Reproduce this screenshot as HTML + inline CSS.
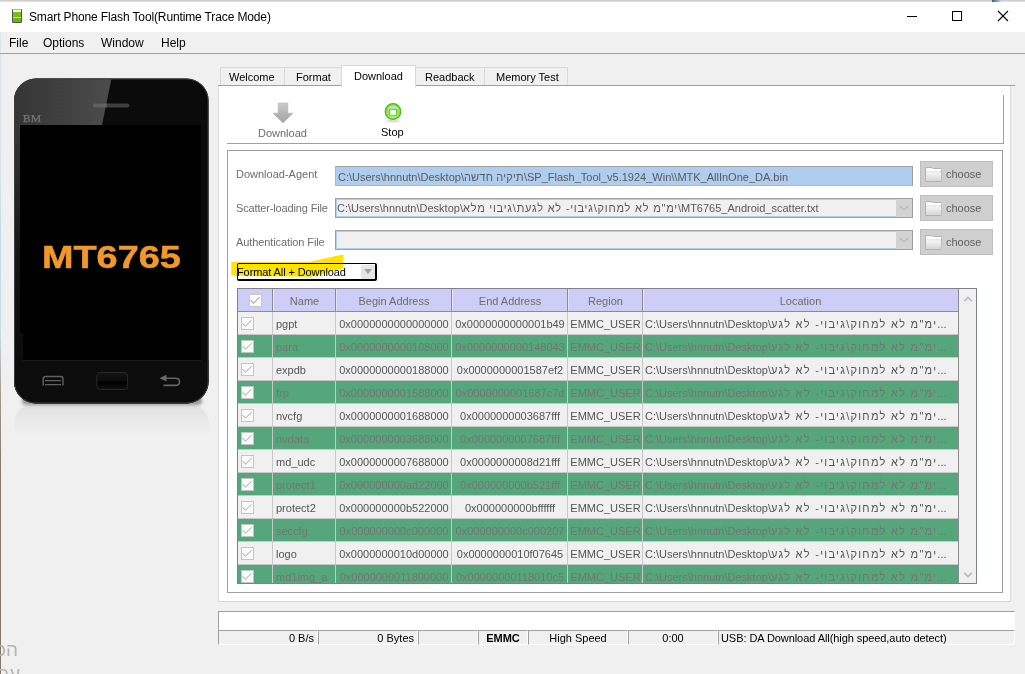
<!DOCTYPE html>
<html><head><meta charset="utf-8">
<style>
*{margin:0;padding:0;box-sizing:border-box}
html,body{width:1025px;height:674px;overflow:hidden;background:#f0f0f0;font-family:"Liberation Sans",sans-serif;color:#000}
.a{position:absolute}
.t{position:absolute;white-space:nowrap;line-height:1}
.h{letter-spacing:1.28px}
</style></head><body>
<!-- window frame -->
<div class="a" style="left:0;top:0;width:1025px;height:2px;background:linear-gradient(#c9c9c9,#e4e4e4)"></div>
<div class="a" style="left:0;top:2px;width:1025px;height:30px;background:#fff"></div>
<div class="a" style="left:0;top:32px;width:1px;height:642px;background:linear-gradient(#dfe4ea 0px,#d6e2ea 150px,#c2dbe8 200px,#c8dce6 300px,#a89a90 360px,#8a7a6e 430px,#86766a 674px)"></div>
<!-- app icon -->
<div class="a" style="left:12px;top:9px;width:10px;height:14px;background:#555;border-radius:1px"></div>
<div class="a" style="left:13px;top:10px;width:8px;height:12px;background:linear-gradient(#7cc414,#6ab010)"></div>
<div class="a" style="left:13px;top:9px;width:8px;height:1px;background:#b4b4b4"></div>
<div class="a" style="left:13px;top:10px;width:8px;height:2px;background:#eef2ea"></div>
<div class="a" style="left:13px;top:17px;width:8px;height:1px;background:#c4e494"></div>
<div class="t" style="left:29px;top:11px;font-size:12px;letter-spacing:-0.13px">Smart Phone Flash Tool(Runtime Trace Mode)</div>
<div class="a" style="left:992px;top:0;width:9px;height:2px;background:linear-gradient(90deg,#3a5a80,#9ab0c8 70%,rgba(220,220,220,0))"></div>
<!-- window buttons -->
<div class="a" style="left:907px;top:16px;width:10px;height:1px;background:#000"></div>
<div class="a" style="left:952px;top:11px;width:10px;height:10px;border:1px solid #000"></div>
<svg class="a" style="left:997px;top:10px" width="12" height="12" viewBox="0 0 12 12"><path d="M1 1L11 11M11 1L1 11" stroke="#000" stroke-width="1.1"/></svg>
<!-- menu -->
<div class="a" style="left:0;top:53px;width:1025px;height:1px;background:#a0a0a0"></div>
<div class="t" style="left:9px;top:37px;font-size:12px">File</div>
<div class="t" style="left:43px;top:37px;font-size:12px">Options</div>
<div class="t" style="left:101px;top:37px;font-size:12px">Window</div>
<div class="t" style="left:161px;top:37px;font-size:12px">Help</div>

<!-- PHONE -->
<svg class="a" style="left:0;top:60px" width="218" height="390" viewBox="0 60 218 390">
<defs>
<linearGradient id="refl" x1="0" y1="0" x2="0" y2="1"><stop offset="0" stop-color="#e2e2e2"/><stop offset="1" stop-color="#f0f0f0"/></linearGradient><filter id="bl2" x="-20%" y="-100%" width="140%" height="300%"><feGaussianBlur stdDeviation="1.5"/></filter>
<linearGradient id="glare" gradientUnits="userSpaceOnUse" x1="14" y1="0" x2="112" y2="0"><stop offset="0" stop-color="#353535"/><stop offset="1" stop-color="#4c4c4c"/></linearGradient>
<linearGradient id="lbz" x1="0" y1="0" x2="0" y2="1"><stop offset="0" stop-color="#383838"/><stop offset="0.6" stop-color="#141414"/><stop offset="1" stop-color="#0c0c0c"/></linearGradient>
<linearGradient id="home" x1="0" y1="0" x2="0" y2="1"><stop offset="0" stop-color="#141414"/><stop offset="0.45" stop-color="#0c0c0c"/><stop offset="0.6" stop-color="#000"/><stop offset="1" stop-color="#111"/></linearGradient>
<clipPath id="pc"><rect x="14" y="78.5" width="194.6" height="325" rx="22" ry="22"/></clipPath>
</defs>
<path d="M14 436 V426 Q14 404.5 36 404.5 H187 Q209 404.5 209 426 V436 Z" fill="url(#refl)"/>
<rect x="22" y="396" width="180" height="9" rx="4" fill="#000" opacity="0.35" filter="url(#bl2)"/>
<rect x="14" y="78.5" width="194.6" height="325" rx="22" ry="22" fill="#0b0b0b"/>
<g clip-path="url(#pc)">
<path d="M0 60 L112 60 L111.6 78 L102 125 L0 125 Z" fill="url(#glare)"/>
<rect x="0" y="360" width="218" height="50" fill="#0c0c0c"/>
<rect x="0" y="124" width="21" height="230" fill="url(#lbz)"/>
</g>
<rect x="14.5" y="79" width="193.6" height="324" rx="21.5" ry="21.5" fill="none" stroke="#3e3e3e" stroke-width="1"/>
<rect x="20" y="125" width="181" height="235" fill="#000"/>
<rect x="20" y="333" width="3" height="28" fill="#0d0d0d"/>
<line x1="23" y1="360.5" x2="201" y2="360.5" stroke="#1c1c1c" stroke-width="1"/>
<rect x="93" y="103.5" width="36.5" height="4" rx="2" fill="#3e3e3e"/><path d="M95 103.5 H107.2 L106.4 107.5 H95 A2 2 0 0 1 95 103.5Z" fill="#626262"/>
<text x="22.8" y="121.9" font-family="Liberation Serif" font-size="10.6" fill="#747474" stroke="#747474" stroke-width="0.25" textLength="18.3" lengthAdjust="spacingAndGlyphs">BM</text>
<path d="M43.2 385.5 V379 q0 -2.5 2.5 -2.5 h14.8 q2.5 0 2.5 2.5 V385.5 M45 380.6 h16 M45 384.6 h16" fill="none" stroke="#606060" stroke-width="1.4"/>
<rect x="96.8" y="372.5" width="30.8" height="17" rx="3.5" fill="url(#home)" stroke="#282828" stroke-width="1"/>
<path d="M159.5 378.2 L166.5 374.8 L166.5 381.6 Z" fill="#6a6a6a"/>
<path d="M165 378.2 H175.5 q4 0 4 3.6 q0 3.6 -4 3.6 H163.5" fill="none" stroke="#646464" stroke-width="1.6"/>
</svg>
<div class="t" style="left:42px;top:242px;font-size:30.5px;font-weight:bold;color:#f0982a;-webkit-text-stroke:0.5px #f0982a;transform:scaleX(1.24);transform-origin:0 0">MT6765</div>
<div class="t" style="left:-4px;top:640px;font-size:19px;color:#b4b4b4">הכ</div>
<div class="t" style="left:-1px;top:664px;font-size:19px;color:#b4b4b4">ער</div>

<!-- TABS -->
<div class="a" style="left:218px;top:85px;width:797px;height:1px;background:#a0a0a0"></div>
<div class="a" style="left:218px;top:86px;width:793px;height:516px;background:#fff;border-left:1px solid #d9d9d9;border-right:1px solid #d9d9d9;border-bottom:1px solid #d9d9d9"></div>
<div class="a" style="left:220px;top:67px;width:65px;height:18px;background:#f0f0f0;border:1px solid #d9d9d9;border-bottom:0"></div>
<div class="a" style="left:284px;top:67px;width:58px;height:18px;background:#f0f0f0;border:1px solid #d9d9d9;border-bottom:0"></div>
<div class="a" style="left:415px;top:67px;width:70px;height:18px;background:#f0f0f0;border:1px solid #d9d9d9;border-bottom:0"></div>
<div class="a" style="left:484px;top:67px;width:84px;height:18px;background:#f0f0f0;border:1px solid #d9d9d9;border-bottom:0"></div>
<div class="a" style="left:341px;top:65px;width:75px;height:22px;background:#fff;border:1px solid #d9d9d9;border-bottom:0"></div>
<div class="t" style="left:229px;top:72px;font-size:11px">Welcome</div>
<div class="t" style="left:296px;top:72px;font-size:11px">Format</div>
<div class="t" style="left:354px;top:71px;font-size:11px">Download</div>
<div class="t" style="left:425px;top:72px;font-size:11px">Readback</div>
<div class="t" style="left:496px;top:72px;font-size:11px">Memory Test</div>


<!-- TOOLBAR -->
<div class="a" style="left:227px;top:143px;width:777px;height:1px;background:#a0a0a0"></div>
<div class="a" style="left:1003px;top:95px;width:1px;height:49px;background:#a0a0a0"></div>
<svg class="a" style="left:273px;top:102px" width="21" height="21" viewBox="0 0 21 21">
<defs><linearGradient id="fg" x1="0" y1="0" x2="0" y2="1"><stop offset="0" stop-color="#f6f6f6"/><stop offset="1" stop-color="#d6d6d6"/></linearGradient><linearGradient id="ag" x1="0" y1="0" x2="0" y2="1"><stop offset="0" stop-color="#cdcdcd"/><stop offset="0.5" stop-color="#b4b4b4"/><stop offset="1" stop-color="#a6a6a6"/></linearGradient></defs>
<path d="M5.2 1h9.6v10.2h5.2l-10 9.8l-10-9.8h5.2z" fill="url(#ag)" stroke="#b0b0b0" stroke-width="0.6"/></svg>
<div class="t" style="left:258px;top:128px;font-size:11px;color:#6d6d6d">Download</div>
<svg class="a" style="left:383px;top:102px" width="20" height="22" viewBox="0 0 20 22">
<defs><radialGradient id="sg" cx="0.5" cy="0.75" r="0.6"><stop offset="0" stop-color="#b4f868"/><stop offset="1" stop-color="#82d848"/></radialGradient>
<filter id="bl"><feGaussianBlur stdDeviation="0.8"/></filter></defs>
<ellipse cx="10" cy="18.8" rx="7" ry="1.3" fill="#c8c8c8" filter="url(#bl)"/>
<circle cx="10" cy="9.5" r="7.8" fill="url(#sg)" stroke="#4cb81c" stroke-width="1.2"/>
<path d="M4 7.5 A6.5 6.5 0 0 1 16 7.5 Z" fill="#c8ecb0" opacity="0.8"/>
<rect x="6.6" y="7.4" width="6.8" height="5.8" fill="#fff" stroke="#62c238" stroke-width="0.9"/>
</svg>
<div class="t" style="left:381px;top:127px;font-size:11px;color:#000">Stop</div>

<!-- GROUPBOX -->
<div class="a" style="left:227px;top:150px;width:776px;height:443px;border:1px solid #a0a0a0"></div>
<div class="t" style="left:236px;top:169px;font-size:11px;color:#6d6d6d">Download-Agent</div>
<div class="t" style="left:236px;top:203px;font-size:11px;color:#6d6d6d;letter-spacing:-0.15px">Scatter-loading File</div>
<div class="t" style="left:236px;top:237px;font-size:11px;color:#6d6d6d;letter-spacing:-0.1px">Authentication File</div>

<div class="a" style="left:335px;top:166px;width:578px;height:20px;background:#afcdee;border:1px solid #a0a0a0;border-left-color:#a8b8cc;border-bottom-color:#a8b8cc"></div>
<div class="t" style="left:338px;top:172px;font-size:11px;color:#5a5a5a">C:\Users\hnnutn\Desktop\<span class="h" style="letter-spacing:0.2px">תיקיה חדשה</span>\SP_Flash_Tool_v5.1924_Win\\MTK_AllInOne_DA.bin</div>

<div class="a" style="left:335px;top:198px;width:578px;height:20px;background:#f0f0f0;border:1px solid #a0a0a0"></div>
<div class="a" style="left:336px;top:199px;width:560px;height:18px;border:1px solid #b4d0f0;border-right:0"></div>
<div class="a" style="left:896px;top:199px;width:16px;height:18px;background:#d2d2d2"></div>
<svg class="a" style="left:898px;top:203px" width="12" height="10" viewBox="0 0 12 10"><path d="M2 3l4 4l4-4" fill="none" stroke="#a8a8a8" stroke-width="1"/></svg>
<div class="t" style="left:337px;top:203px;font-size:11px;color:#5a5a5a">C:\Users\hnnutn\Desktop\<span class="h" style="letter-spacing:0.78px">ימ"מ לא למחוק\גיבוי- לא לגעת\גיבוי מלא</span>\MT6765_Android_scatter.txt</div>

<div class="a" style="left:335px;top:230px;width:578px;height:20px;background:#f0f0f0;border:1px solid #a0a0a0"></div>
<div class="a" style="left:336px;top:231px;width:560px;height:18px;border:1px solid #b4d0f0;border-right:0"></div>
<div class="a" style="left:896px;top:231px;width:16px;height:18px;background:#d2d2d2"></div>
<svg class="a" style="left:898px;top:235px" width="12" height="10" viewBox="0 0 12 10"><path d="M2 3l4 4l4-4" fill="none" stroke="#a8a8a8" stroke-width="1"/></svg>
<div class="a" style="left:920px;top:161px;width:73px;height:26px;background:#cfcfcf;border:1px solid #bdbdbd"></div>
<svg class="a" style="left:925px;top:167px" width="17" height="15" viewBox="0 0 17 15"><path d="M0.5 0.5h6.5l1 1h8v13h-15.5z" fill="#f4f4f4" stroke="#b2b2b2"/><rect x="1" y="2" width="15" height="2.6" fill="#fdfdfd"/><rect x="1" y="4.6" width="15" height="0.8" fill="#cfcfcf"/><rect x="1" y="5.4" width="15" height="8.6" fill="url(#fg)"/></svg>
<div class="t" style="left:946px;top:169px;font-size:11px;color:#5f5f5f">choose</div>
<div class="a" style="left:920px;top:195px;width:73px;height:26px;background:#cfcfcf;border:1px solid #bdbdbd"></div>
<svg class="a" style="left:925px;top:201px" width="17" height="15" viewBox="0 0 17 15"><path d="M0.5 0.5h6.5l1 1h8v13h-15.5z" fill="#f4f4f4" stroke="#b2b2b2"/><rect x="1" y="2" width="15" height="2.6" fill="#fdfdfd"/><rect x="1" y="4.6" width="15" height="0.8" fill="#cfcfcf"/><rect x="1" y="5.4" width="15" height="8.6" fill="url(#fg)"/></svg>
<div class="t" style="left:946px;top:203px;font-size:11px;color:#5f5f5f">choose</div>
<div class="a" style="left:920px;top:229px;width:73px;height:26px;background:#cfcfcf;border:1px solid #bdbdbd"></div>
<svg class="a" style="left:925px;top:235px" width="17" height="15" viewBox="0 0 17 15"><path d="M0.5 0.5h6.5l1 1h8v13h-15.5z" fill="#f4f4f4" stroke="#b2b2b2"/><rect x="1" y="2" width="15" height="2.6" fill="#fdfdfd"/><rect x="1" y="4.6" width="15" height="0.8" fill="#cfcfcf"/><rect x="1" y="5.4" width="15" height="8.6" fill="url(#fg)"/></svg>
<div class="t" style="left:946px;top:237px;font-size:11px;color:#5f5f5f">choose</div>

<!-- FORMAT COMBO -->
<div class="a" style="left:237px;top:263px;width:140px;height:18px;background:#fff;border:1px solid #000;border-right-width:2px;border-bottom-width:2px;border-radius:2px"></div>
<div class="a" style="left:361px;top:265px;width:14px;height:14px;background:#e6e6e6"></div>
<svg class="a" style="left:362px;top:268px" width="12" height="8" viewBox="0 0 12 8"><path d="M2 1h8l-4 5z" fill="#a0a0a0"/></svg>
<div class="t" style="left:237px;top:267px;font-size:11px;color:#000;letter-spacing:-0.1px">Format All + Download</div>
<svg class="a" style="left:230px;top:253px;mix-blend-mode:multiply" width="116" height="25" viewBox="0 0 116 25"><path d="M1.3 8.9 L 79 9 C 90 7, 104 3, 113.5 1.8 L 113.5 14.9 C 104 17.5, 92 21.5, 81 23.8 L 1.3 22.6 Z" fill="#fee300"/></svg>

<!-- TABLE -->
<div class="a" style="left:237px;top:288px;width:740px;height:296px;border:1px solid #80808c;background:#f0f0f0;overflow:hidden">
<div class="a" style="left:0;top:0;width:721px;height:23px;background:#cdcdf5;border-bottom:1px solid #8c8c8c"></div>
<div class="a" style="left:34px;top:0;width:1px;height:22px;background:#8c8c98"></div><div class="a" style="left:35px;top:0;width:1px;height:22px;background:#e4e4f8"></div>
<div class="a" style="left:97px;top:0;width:1px;height:22px;background:#8c8c98"></div><div class="a" style="left:98px;top:0;width:1px;height:22px;background:#e4e4f8"></div>
<div class="a" style="left:213px;top:0;width:1px;height:22px;background:#8c8c98"></div><div class="a" style="left:214px;top:0;width:1px;height:22px;background:#e4e4f8"></div>
<div class="a" style="left:329px;top:0;width:1px;height:22px;background:#8c8c98"></div><div class="a" style="left:330px;top:0;width:1px;height:22px;background:#e4e4f8"></div>
<div class="a" style="left:404px;top:0;width:1px;height:22px;background:#8c8c98"></div><div class="a" style="left:405px;top:0;width:1px;height:22px;background:#e4e4f8"></div>
<div class="a" style="left:720px;top:0;width:1px;height:296px;background:#8c8c8c"></div>
<div class="a" style="left:0;top:23px;width:1px;height:273px;background:#d8d8d8"></div><div class="a" style="left:1px;top:23px;width:1px;height:273px;background:rgba(255,255,255,0.35)"></div>
<div class="a" style="left:11px;top:5px;width:13px;height:13px;background:#fdfdfd;border:1px solid #c8c8c8"></div><svg class="a" style="left:11px;top:5px" width="13" height="13" viewBox="0 0 13 13"><path d="M1.6 6.2L4.4 9.2L10.6 3.2" fill="none" stroke="#a8a8a8" stroke-width="1.1"/></svg>
<div class="t" style="left:35px;top:7px;width:63px;text-align:center;font-size:11px;color:#6d6d6d">Name</div>
<div class="t" style="left:98px;top:7px;width:116px;text-align:center;font-size:11px;color:#6d6d6d">Begin Address</div>
<div class="t" style="left:214px;top:7px;width:116px;text-align:center;font-size:11px;color:#6d6d6d">End Address</div>
<div class="t" style="left:330px;top:7px;width:75px;text-align:center;font-size:11px;color:#6d6d6d">Region</div>
<div class="t" style="left:405px;top:7px;width:315px;text-align:center;font-size:11px;color:#6d6d6d">Location</div>
<div class="a" style="left:0;top:23px;width:720px;height:23px;background:#f0f0f0;border-bottom:1px solid #c8c8c8"></div>
<div class="a" style="left:34px;top:23px;width:1px;height:23px;background:#c8c8c8"></div>
<div class="a" style="left:97px;top:23px;width:1px;height:23px;background:#c8c8c8"></div>
<div class="a" style="left:213px;top:23px;width:1px;height:23px;background:#c8c8c8"></div>
<div class="a" style="left:329px;top:23px;width:1px;height:23px;background:#c8c8c8"></div>
<div class="a" style="left:404px;top:23px;width:1px;height:23px;background:#c8c8c8"></div>
<div class="a" style="left:3px;top:28px;width:13px;height:13px;background:#fafafa;border:1px solid #c4c4c4"></div><svg class="a" style="left:3px;top:28px" width="13" height="13" viewBox="0 0 13 13"><path d="M1.6 6.2L4.4 9.2L10.6 3.2" fill="none" stroke="#a4a4a4" stroke-width="1"/></svg>
<div class="t" style="left:38px;top:30px;font-size:11px;color:#555555">pgpt</div>
<div class="t" style="left:98px;top:30px;width:116px;text-align:center;font-size:11px;color:#555555">0x0000000000000000</div>
<div class="t" style="left:214px;top:30px;width:116px;text-align:center;font-size:11px;color:#555555">0x0000000000001b49</div>
<div class="t" style="left:330px;top:30px;width:75px;text-align:center;font-size:11px;color:#555555">EMMC_USER</div>
<div class="t" style="left:407px;top:30px;font-size:11px;color:#555555">C:\Users\hnnutn\Desktop\<span class="h">ימ"מ לא למחוק\גיבוי- לא לגע</span>...</div>
<div class="a" style="left:0;top:46px;width:720px;height:23px;background:#55a77b;border-bottom:1px solid #c8c8c8"></div>
<div class="a" style="left:34px;top:46px;width:1px;height:23px;background:#c8c8c8"></div>
<div class="a" style="left:97px;top:46px;width:1px;height:23px;background:#c8c8c8"></div>
<div class="a" style="left:213px;top:46px;width:1px;height:23px;background:#c8c8c8"></div>
<div class="a" style="left:329px;top:46px;width:1px;height:23px;background:#c8c8c8"></div>
<div class="a" style="left:404px;top:46px;width:1px;height:23px;background:#c8c8c8"></div>
<div class="a" style="left:3px;top:51px;width:13px;height:13px;background:#fafafa;border:1px solid #c4c4c4"></div><svg class="a" style="left:3px;top:51px" width="13" height="13" viewBox="0 0 13 13"><path d="M1.6 6.2L4.4 9.2L10.6 3.2" fill="none" stroke="#a4a4a4" stroke-width="1"/></svg>
<div class="t" style="left:38px;top:53px;font-size:11px;color:#747474">para</div>
<div class="t" style="left:98px;top:53px;width:116px;text-align:center;font-size:11px;color:#747474">0x0000000000108000</div>
<div class="t" style="left:214px;top:53px;width:116px;text-align:center;font-size:11px;color:#747474">0x0000000000148043</div>
<div class="t" style="left:330px;top:53px;width:75px;text-align:center;font-size:11px;color:#747474">EMMC_USER</div>
<div class="t" style="left:407px;top:53px;font-size:11px;color:#747474">C:\Users\hnnutn\Desktop\<span class="h">ימ"מ לא למחוק\גיבוי- לא לגע</span>...</div>
<div class="a" style="left:0;top:69px;width:720px;height:23px;background:#f0f0f0;border-bottom:1px solid #c8c8c8"></div>
<div class="a" style="left:34px;top:69px;width:1px;height:23px;background:#c8c8c8"></div>
<div class="a" style="left:97px;top:69px;width:1px;height:23px;background:#c8c8c8"></div>
<div class="a" style="left:213px;top:69px;width:1px;height:23px;background:#c8c8c8"></div>
<div class="a" style="left:329px;top:69px;width:1px;height:23px;background:#c8c8c8"></div>
<div class="a" style="left:404px;top:69px;width:1px;height:23px;background:#c8c8c8"></div>
<div class="a" style="left:3px;top:74px;width:13px;height:13px;background:#fafafa;border:1px solid #c4c4c4"></div><svg class="a" style="left:3px;top:74px" width="13" height="13" viewBox="0 0 13 13"><path d="M1.6 6.2L4.4 9.2L10.6 3.2" fill="none" stroke="#a4a4a4" stroke-width="1"/></svg>
<div class="t" style="left:38px;top:76px;font-size:11px;color:#555555">expdb</div>
<div class="t" style="left:98px;top:76px;width:116px;text-align:center;font-size:11px;color:#555555">0x0000000000188000</div>
<div class="t" style="left:214px;top:76px;width:116px;text-align:center;font-size:11px;color:#555555">0x0000000001587ef2</div>
<div class="t" style="left:330px;top:76px;width:75px;text-align:center;font-size:11px;color:#555555">EMMC_USER</div>
<div class="t" style="left:407px;top:76px;font-size:11px;color:#555555">C:\Users\hnnutn\Desktop\<span class="h">ימ"מ לא למחוק\גיבוי- לא לגע</span>...</div>
<div class="a" style="left:0;top:92px;width:720px;height:23px;background:#55a77b;border-bottom:1px solid #c8c8c8"></div>
<div class="a" style="left:34px;top:92px;width:1px;height:23px;background:#c8c8c8"></div>
<div class="a" style="left:97px;top:92px;width:1px;height:23px;background:#c8c8c8"></div>
<div class="a" style="left:213px;top:92px;width:1px;height:23px;background:#c8c8c8"></div>
<div class="a" style="left:329px;top:92px;width:1px;height:23px;background:#c8c8c8"></div>
<div class="a" style="left:404px;top:92px;width:1px;height:23px;background:#c8c8c8"></div>
<div class="a" style="left:3px;top:97px;width:13px;height:13px;background:#fafafa;border:1px solid #c4c4c4"></div><svg class="a" style="left:3px;top:97px" width="13" height="13" viewBox="0 0 13 13"><path d="M1.6 6.2L4.4 9.2L10.6 3.2" fill="none" stroke="#a4a4a4" stroke-width="1"/></svg>
<div class="t" style="left:38px;top:99px;font-size:11px;color:#747474">frp</div>
<div class="t" style="left:98px;top:99px;width:116px;text-align:center;font-size:11px;color:#747474">0x0000000001588000</div>
<div class="t" style="left:214px;top:99px;width:116px;text-align:center;font-size:11px;color:#747474">0x0000000001687c7d</div>
<div class="t" style="left:330px;top:99px;width:75px;text-align:center;font-size:11px;color:#747474">EMMC_USER</div>
<div class="t" style="left:407px;top:99px;font-size:11px;color:#747474">C:\Users\hnnutn\Desktop\<span class="h">ימ"מ לא למחוק\גיבוי- לא לגע</span>...</div>
<div class="a" style="left:0;top:115px;width:720px;height:23px;background:#f0f0f0;border-bottom:1px solid #c8c8c8"></div>
<div class="a" style="left:34px;top:115px;width:1px;height:23px;background:#c8c8c8"></div>
<div class="a" style="left:97px;top:115px;width:1px;height:23px;background:#c8c8c8"></div>
<div class="a" style="left:213px;top:115px;width:1px;height:23px;background:#c8c8c8"></div>
<div class="a" style="left:329px;top:115px;width:1px;height:23px;background:#c8c8c8"></div>
<div class="a" style="left:404px;top:115px;width:1px;height:23px;background:#c8c8c8"></div>
<div class="a" style="left:3px;top:120px;width:13px;height:13px;background:#fafafa;border:1px solid #c4c4c4"></div><svg class="a" style="left:3px;top:120px" width="13" height="13" viewBox="0 0 13 13"><path d="M1.6 6.2L4.4 9.2L10.6 3.2" fill="none" stroke="#a4a4a4" stroke-width="1"/></svg>
<div class="t" style="left:38px;top:122px;font-size:11px;color:#555555">nvcfg</div>
<div class="t" style="left:98px;top:122px;width:116px;text-align:center;font-size:11px;color:#555555">0x0000000001688000</div>
<div class="t" style="left:214px;top:122px;width:116px;text-align:center;font-size:11px;color:#555555">0x0000000003687fff</div>
<div class="t" style="left:330px;top:122px;width:75px;text-align:center;font-size:11px;color:#555555">EMMC_USER</div>
<div class="t" style="left:407px;top:122px;font-size:11px;color:#555555">C:\Users\hnnutn\Desktop\<span class="h">ימ"מ לא למחוק\גיבוי- לא לגע</span>...</div>
<div class="a" style="left:0;top:138px;width:720px;height:23px;background:#55a77b;border-bottom:1px solid #c8c8c8"></div>
<div class="a" style="left:34px;top:138px;width:1px;height:23px;background:#c8c8c8"></div>
<div class="a" style="left:97px;top:138px;width:1px;height:23px;background:#c8c8c8"></div>
<div class="a" style="left:213px;top:138px;width:1px;height:23px;background:#c8c8c8"></div>
<div class="a" style="left:329px;top:138px;width:1px;height:23px;background:#c8c8c8"></div>
<div class="a" style="left:404px;top:138px;width:1px;height:23px;background:#c8c8c8"></div>
<div class="a" style="left:3px;top:143px;width:13px;height:13px;background:#fafafa;border:1px solid #c4c4c4"></div><svg class="a" style="left:3px;top:143px" width="13" height="13" viewBox="0 0 13 13"><path d="M1.6 6.2L4.4 9.2L10.6 3.2" fill="none" stroke="#a4a4a4" stroke-width="1"/></svg>
<div class="t" style="left:38px;top:145px;font-size:11px;color:#747474">nvdata</div>
<div class="t" style="left:98px;top:145px;width:116px;text-align:center;font-size:11px;color:#747474">0x0000000003688000</div>
<div class="t" style="left:214px;top:145px;width:116px;text-align:center;font-size:11px;color:#747474">0x0000000007687fff</div>
<div class="t" style="left:330px;top:145px;width:75px;text-align:center;font-size:11px;color:#747474">EMMC_USER</div>
<div class="t" style="left:407px;top:145px;font-size:11px;color:#747474">C:\Users\hnnutn\Desktop\<span class="h">ימ"מ לא למחוק\גיבוי- לא לגע</span>...</div>
<div class="a" style="left:0;top:161px;width:720px;height:23px;background:#f0f0f0;border-bottom:1px solid #c8c8c8"></div>
<div class="a" style="left:34px;top:161px;width:1px;height:23px;background:#c8c8c8"></div>
<div class="a" style="left:97px;top:161px;width:1px;height:23px;background:#c8c8c8"></div>
<div class="a" style="left:213px;top:161px;width:1px;height:23px;background:#c8c8c8"></div>
<div class="a" style="left:329px;top:161px;width:1px;height:23px;background:#c8c8c8"></div>
<div class="a" style="left:404px;top:161px;width:1px;height:23px;background:#c8c8c8"></div>
<div class="a" style="left:3px;top:166px;width:13px;height:13px;background:#fafafa;border:1px solid #c4c4c4"></div><svg class="a" style="left:3px;top:166px" width="13" height="13" viewBox="0 0 13 13"><path d="M1.6 6.2L4.4 9.2L10.6 3.2" fill="none" stroke="#a4a4a4" stroke-width="1"/></svg>
<div class="t" style="left:38px;top:168px;font-size:11px;color:#555555">md_udc</div>
<div class="t" style="left:98px;top:168px;width:116px;text-align:center;font-size:11px;color:#555555">0x0000000007688000</div>
<div class="t" style="left:214px;top:168px;width:116px;text-align:center;font-size:11px;color:#555555">0x0000000008d21fff</div>
<div class="t" style="left:330px;top:168px;width:75px;text-align:center;font-size:11px;color:#555555">EMMC_USER</div>
<div class="t" style="left:407px;top:168px;font-size:11px;color:#555555">C:\Users\hnnutn\Desktop\<span class="h">ימ"מ לא למחוק\גיבוי- לא לגע</span>...</div>
<div class="a" style="left:0;top:184px;width:720px;height:23px;background:#55a77b;border-bottom:1px solid #c8c8c8"></div>
<div class="a" style="left:34px;top:184px;width:1px;height:23px;background:#c8c8c8"></div>
<div class="a" style="left:97px;top:184px;width:1px;height:23px;background:#c8c8c8"></div>
<div class="a" style="left:213px;top:184px;width:1px;height:23px;background:#c8c8c8"></div>
<div class="a" style="left:329px;top:184px;width:1px;height:23px;background:#c8c8c8"></div>
<div class="a" style="left:404px;top:184px;width:1px;height:23px;background:#c8c8c8"></div>
<div class="a" style="left:3px;top:189px;width:13px;height:13px;background:#fafafa;border:1px solid #c4c4c4"></div><svg class="a" style="left:3px;top:189px" width="13" height="13" viewBox="0 0 13 13"><path d="M1.6 6.2L4.4 9.2L10.6 3.2" fill="none" stroke="#a4a4a4" stroke-width="1"/></svg>
<div class="t" style="left:38px;top:191px;font-size:11px;color:#747474">protect1</div>
<div class="t" style="left:98px;top:191px;width:116px;text-align:center;font-size:11px;color:#747474">0x000000000ad22000</div>
<div class="t" style="left:214px;top:191px;width:116px;text-align:center;font-size:11px;color:#747474">0x000000000b521fff</div>
<div class="t" style="left:330px;top:191px;width:75px;text-align:center;font-size:11px;color:#747474">EMMC_USER</div>
<div class="t" style="left:407px;top:191px;font-size:11px;color:#747474">C:\Users\hnnutn\Desktop\<span class="h">ימ"מ לא למחוק\גיבוי- לא לגע</span>...</div>
<div class="a" style="left:0;top:207px;width:720px;height:23px;background:#f0f0f0;border-bottom:1px solid #c8c8c8"></div>
<div class="a" style="left:34px;top:207px;width:1px;height:23px;background:#c8c8c8"></div>
<div class="a" style="left:97px;top:207px;width:1px;height:23px;background:#c8c8c8"></div>
<div class="a" style="left:213px;top:207px;width:1px;height:23px;background:#c8c8c8"></div>
<div class="a" style="left:329px;top:207px;width:1px;height:23px;background:#c8c8c8"></div>
<div class="a" style="left:404px;top:207px;width:1px;height:23px;background:#c8c8c8"></div>
<div class="a" style="left:3px;top:212px;width:13px;height:13px;background:#fafafa;border:1px solid #c4c4c4"></div><svg class="a" style="left:3px;top:212px" width="13" height="13" viewBox="0 0 13 13"><path d="M1.6 6.2L4.4 9.2L10.6 3.2" fill="none" stroke="#a4a4a4" stroke-width="1"/></svg>
<div class="t" style="left:38px;top:214px;font-size:11px;color:#555555">protect2</div>
<div class="t" style="left:98px;top:214px;width:116px;text-align:center;font-size:11px;color:#555555">0x000000000b522000</div>
<div class="t" style="left:214px;top:214px;width:116px;text-align:center;font-size:11px;color:#555555">0x000000000bffffff</div>
<div class="t" style="left:330px;top:214px;width:75px;text-align:center;font-size:11px;color:#555555">EMMC_USER</div>
<div class="t" style="left:407px;top:214px;font-size:11px;color:#555555">C:\Users\hnnutn\Desktop\<span class="h">ימ"מ לא למחוק\גיבוי- לא לגע</span>...</div>
<div class="a" style="left:0;top:230px;width:720px;height:23px;background:#55a77b;border-bottom:1px solid #c8c8c8"></div>
<div class="a" style="left:34px;top:230px;width:1px;height:23px;background:#c8c8c8"></div>
<div class="a" style="left:97px;top:230px;width:1px;height:23px;background:#c8c8c8"></div>
<div class="a" style="left:213px;top:230px;width:1px;height:23px;background:#c8c8c8"></div>
<div class="a" style="left:329px;top:230px;width:1px;height:23px;background:#c8c8c8"></div>
<div class="a" style="left:404px;top:230px;width:1px;height:23px;background:#c8c8c8"></div>
<div class="a" style="left:3px;top:235px;width:13px;height:13px;background:#fafafa;border:1px solid #c4c4c4"></div><svg class="a" style="left:3px;top:235px" width="13" height="13" viewBox="0 0 13 13"><path d="M1.6 6.2L4.4 9.2L10.6 3.2" fill="none" stroke="#a4a4a4" stroke-width="1"/></svg>
<div class="t" style="left:38px;top:237px;font-size:11px;color:#747474">seccfg</div>
<div class="t" style="left:98px;top:237px;width:116px;text-align:center;font-size:11px;color:#747474">0x000000000c000000</div>
<div class="t" style="left:214px;top:237px;width:116px;text-align:center;font-size:11px;color:#747474">0x000000000c000207</div>
<div class="t" style="left:330px;top:237px;width:75px;text-align:center;font-size:11px;color:#747474">EMMC_USER</div>
<div class="t" style="left:407px;top:237px;font-size:11px;color:#747474">C:\Users\hnnutn\Desktop\<span class="h">ימ"מ לא למחוק\גיבוי- לא לגע</span>...</div>
<div class="a" style="left:0;top:253px;width:720px;height:23px;background:#f0f0f0;border-bottom:1px solid #c8c8c8"></div>
<div class="a" style="left:34px;top:253px;width:1px;height:23px;background:#c8c8c8"></div>
<div class="a" style="left:97px;top:253px;width:1px;height:23px;background:#c8c8c8"></div>
<div class="a" style="left:213px;top:253px;width:1px;height:23px;background:#c8c8c8"></div>
<div class="a" style="left:329px;top:253px;width:1px;height:23px;background:#c8c8c8"></div>
<div class="a" style="left:404px;top:253px;width:1px;height:23px;background:#c8c8c8"></div>
<div class="a" style="left:3px;top:258px;width:13px;height:13px;background:#fafafa;border:1px solid #c4c4c4"></div><svg class="a" style="left:3px;top:258px" width="13" height="13" viewBox="0 0 13 13"><path d="M1.6 6.2L4.4 9.2L10.6 3.2" fill="none" stroke="#a4a4a4" stroke-width="1"/></svg>
<div class="t" style="left:38px;top:260px;font-size:11px;color:#555555">logo</div>
<div class="t" style="left:98px;top:260px;width:116px;text-align:center;font-size:11px;color:#555555">0x0000000010d00000</div>
<div class="t" style="left:214px;top:260px;width:116px;text-align:center;font-size:11px;color:#555555">0x0000000010f07645</div>
<div class="t" style="left:330px;top:260px;width:75px;text-align:center;font-size:11px;color:#555555">EMMC_USER</div>
<div class="t" style="left:407px;top:260px;font-size:11px;color:#555555">C:\Users\hnnutn\Desktop\<span class="h">ימ"מ לא למחוק\גיבוי- לא לגע</span>...</div>
<div class="a" style="left:0;top:276px;width:720px;height:23px;background:#55a77b;border-bottom:1px solid #c8c8c8"></div>
<div class="a" style="left:34px;top:276px;width:1px;height:23px;background:#c8c8c8"></div>
<div class="a" style="left:97px;top:276px;width:1px;height:23px;background:#c8c8c8"></div>
<div class="a" style="left:213px;top:276px;width:1px;height:23px;background:#c8c8c8"></div>
<div class="a" style="left:329px;top:276px;width:1px;height:23px;background:#c8c8c8"></div>
<div class="a" style="left:404px;top:276px;width:1px;height:23px;background:#c8c8c8"></div>
<div class="a" style="left:3px;top:281px;width:13px;height:13px;background:#fafafa;border:1px solid #c4c4c4"></div><svg class="a" style="left:3px;top:281px" width="13" height="13" viewBox="0 0 13 13"><path d="M1.6 6.2L4.4 9.2L10.6 3.2" fill="none" stroke="#a4a4a4" stroke-width="1"/></svg>
<div class="t" style="left:38px;top:283px;font-size:11px;color:#747474">md1img_a</div>
<div class="t" style="left:98px;top:283px;width:116px;text-align:center;font-size:11px;color:#747474">0x0000000011800000</div>
<div class="t" style="left:214px;top:283px;width:116px;text-align:center;font-size:11px;color:#747474">0x00000000118010c5</div>
<div class="t" style="left:330px;top:283px;width:75px;text-align:center;font-size:11px;color:#747474">EMMC_USER</div>
<div class="t" style="left:407px;top:283px;font-size:11px;color:#747474">C:\Users\hnnutn\Desktop\<span class="h">ימ"מ לא למחוק\גיבוי- לא לגע</span>...</div>
<svg class="a" style="left:724px;top:6px" width="12" height="8" viewBox="0 0 12 8"><path d="M2.2 6.2l3.8-3.8l3.8 3.8" fill="none" stroke="#bcbcbc" stroke-width="1.7"/></svg>
<svg class="a" style="left:724px;top:282px" width="12" height="8" viewBox="0 0 12 8"><path d="M2.2 1.8l3.8 3.8l3.8-3.8" fill="none" stroke="#bcbcbc" stroke-width="1.7"/></svg>
</div>

<!-- PROGRESS + STATUS -->
<div class="a" style="left:218px;top:611px;width:797px;height:19px;background:#fff;border-top:1px solid #a0a0a0;border-left:1px solid #a0a0a0;border-right:1px solid #fff"></div>
<div class="a" style="left:218px;top:630px;width:100px;height:15px;background:#f0f0f0;border-top:1px solid #a0a0a0;border-left:1px solid #a0a0a0;border-right:1px solid #fff;border-bottom:1px solid #fff"></div>
<div class="t" style="left:217px;top:633px;width:100px;text-align:right;font-size:11px;font-weight:normal;padding-right:3px">0 B/s</div>
<div class="a" style="left:318px;top:630px;width:100px;height:15px;background:#f0f0f0;border-top:1px solid #a0a0a0;border-left:1px solid #a0a0a0;border-right:1px solid #fff;border-bottom:1px solid #fff"></div>
<div class="t" style="left:317px;top:633px;width:100px;text-align:right;font-size:11px;font-weight:normal;padding-right:3px">0 Bytes</div>
<div class="a" style="left:418px;top:630px;width:60px;height:15px;background:#f0f0f0;border-top:1px solid #a0a0a0;border-left:1px solid #a0a0a0;border-right:1px solid #fff;border-bottom:1px solid #fff"></div>
<div class="a" style="left:478px;top:630px;width:50px;height:15px;background:#f0f0f0;border-top:1px solid #a0a0a0;border-left:1px solid #a0a0a0;border-right:1px solid #fff;border-bottom:1px solid #fff"></div>
<div class="t" style="left:478px;top:633px;width:50px;text-align:center;font-size:11px;font-weight:bold;">EMMC</div>
<div class="a" style="left:528px;top:630px;width:100px;height:15px;background:#f0f0f0;border-top:1px solid #a0a0a0;border-left:1px solid #a0a0a0;border-right:1px solid #fff;border-bottom:1px solid #fff"></div>
<div class="t" style="left:528px;top:633px;width:100px;text-align:center;font-size:11px;font-weight:normal;">High Speed</div>
<div class="a" style="left:628px;top:630px;width:90px;height:15px;background:#f0f0f0;border-top:1px solid #a0a0a0;border-left:1px solid #a0a0a0;border-right:1px solid #fff;border-bottom:1px solid #fff"></div>
<div class="t" style="left:628px;top:633px;width:90px;text-align:center;font-size:11px;font-weight:normal;">0:00</div>
<div class="a" style="left:718px;top:630px;width:297px;height:15px;background:#f0f0f0;border-top:1px solid #a0a0a0;border-left:1px solid #a0a0a0;border-right:1px solid #fff;border-bottom:1px solid #fff"></div>
<div class="t" style="left:718px;top:633px;width:297px;text-align:left;font-size:11px;font-weight:normal;padding-left:3px;letter-spacing:-0.07px">USB: DA Download All(high speed,auto detect)</div>
</body></html>
